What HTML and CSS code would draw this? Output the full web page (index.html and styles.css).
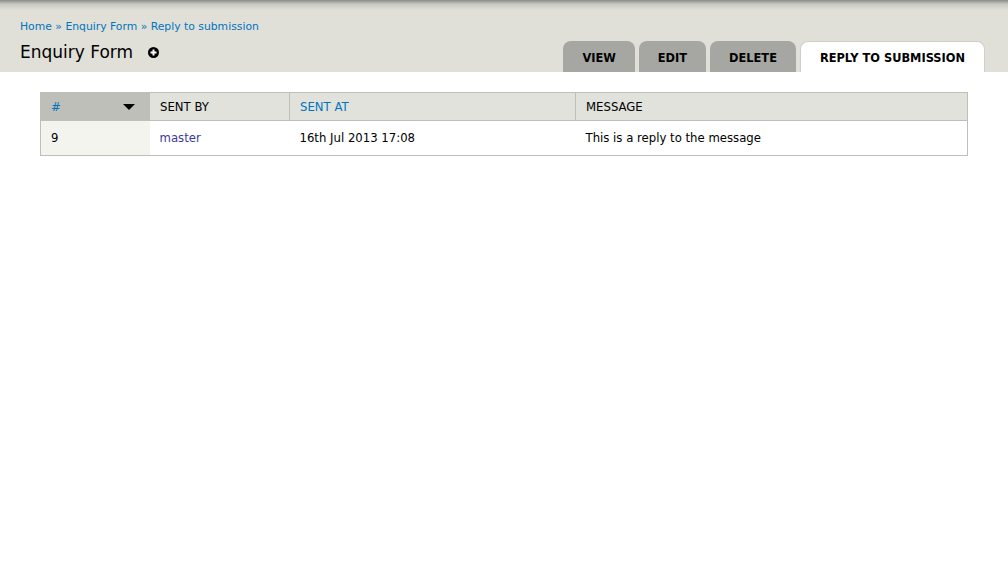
FILE: index.html
```html
<!DOCTYPE html>
<html>
<head>
<meta charset="utf-8">
<link rel="stylesheet" href="styles.css">
</head>
<body>
<div class="branding">
  <div class="breadcrumb"><a href="#">Home</a> » <a href="#">Enquiry Form</a> » <a href="#">Reply to submission</a></div>
  <div class="titlebar">
    <h1 class="page-title">Enquiry Form <span class="add-icon"><svg width="11" height="11" viewBox="0 0 11 11"><circle cx="5.5" cy="5.5" r="5.5" fill="#000"/><rect x="2.5" y="4.5" width="6" height="2" fill="#fff"/><rect x="4.5" y="2.5" width="2" height="6" fill="#fff"/></svg></span></h1>
    <ul class="tabs">
      <li class="tab"><a href="#">VIEW</a></li>
      <li class="tab"><a href="#">EDIT</a></li>
      <li class="tab"><a href="#">DELETE</a></li>
      <li class="tab active"><a href="#">REPLY TO SUBMISSION</a></li>
    </ul>
  </div>
</div>
<div class="page">
  <table class="grid">
    <thead>
      <tr>
        <th class="c1 sorted"><a href="#">#</a><span class="arrow"></span></th>
        <th class="c2">SENT BY</th>
        <th class="c3"><a href="#">SENT AT</a></th>
        <th class="c4">MESSAGE</th>
      </tr>
    </thead>
    <tbody>
      <tr>
        <td class="sorted-cell">9</td>
        <td><a href="#" class="user">master</a></td>
        <td>16th Jul 2013 17:08</td>
        <td>This is a reply to the message</td>
      </tr>
    </tbody>
  </table>
</div>
</body>
</html>
```
FILE: styles.css
```css
html, body { margin: 0; padding: 0; background: #fff; }
body { font-family: "DejaVu Sans", Verdana, sans-serif; font-size: 12px; color: #000; }
a { color: #0074bd; text-decoration: none; }
.branding {
  background: linear-gradient(to bottom, #8a8a86 0px, #c8c8c2 4px, #e0e0d8 10px, #e0e0d8 100%);
  height: 72px;
  padding: 0 20px;
  box-sizing: border-box;
  display: flex;
  flex-direction: column;
}
.breadcrumb { padding-top: 19px; font-size: 10.8px; line-height: 16px; color: #0074bd; }
.titlebar { display: flex; justify-content: space-between; align-items: flex-end; flex: 1; }
.page-title { margin: 0; font-weight: normal; font-size: 17px; line-height: 20px; padding-bottom: 10px; display: flex; align-items: center; }
.add-icon { margin-left: 15px; display: inline-flex; }
.tabs { list-style: none; margin: 0 3px 0 0; padding: 0; display: flex; gap: 4px; }
.tab a {
  display: block;
  background: #a6a7a2;
  color: #000;
  font-weight: bold;
  font-size: 11.4px;
  height: 31px;
  line-height: 34px;
  padding: 0 19px;
  border-radius: 8px 8px 0 0;
  box-sizing: border-box;
}
.tab.active a { background: #fff; border: 1px solid #d0d0ca; border-bottom: none; line-height: 32px; }
.page { padding: 20px 40px; }
.grid { width: 928px; border-collapse: collapse; border: 1px solid #bebfb9; font-size: 11.7px; }
.grid th { background: #e1e2dc; text-align: left; font-weight: normal; height: 27px; padding: 0 10px; border-right: 1px solid #bebfb9; border-bottom: 1px solid #bebfb9; position: relative; }
.grid th.sorted { background: #bebfb9; }
.grid th.c1 { width: 88px; }
.grid th.c2 { width: 119px; }
.grid th.c3 { width: 265px; }
.grid td { height: 34px; padding: 0 10px; }
.grid td.sorted-cell { background: #f3f4ee; }
.user { color: #3b3b9e; }
.arrow { position: absolute; right: 14px; top: 11px; width: 0; height: 0; border-left: 6px solid transparent; border-right: 6px solid transparent; border-top: 6px solid #000; }
```
